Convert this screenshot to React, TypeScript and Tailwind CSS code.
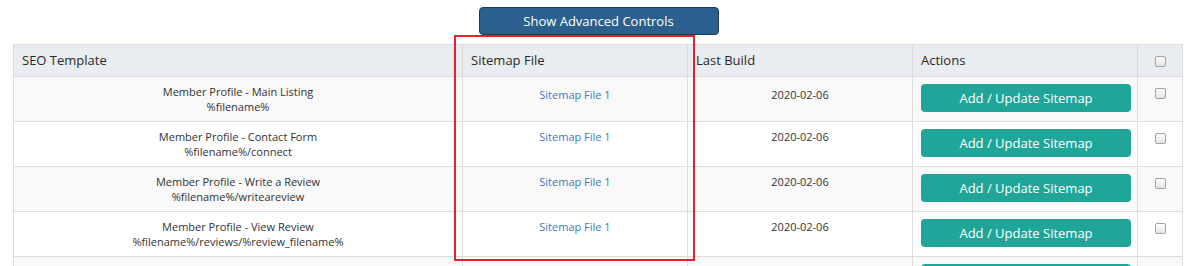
import React from "react";

interface Row {
  title: string;
  path: string;
}

const rows: Row[] = [
  { title: "Member Profile - Main Listing", path: "%filename%" },
  { title: "Member Profile - Contact Form", path: "%filename%/connect" },
  { title: "Member Profile - Write a Review", path: "%filename%/writeareview" },
  { title: "Member Profile - View Review", path: "%filename%/reviews/%review_filename%" },
];

function Box() {
  return (
    <span className="inline-block w-[11px] h-[11px] rounded-[2px] border border-[#a3a3a3] bg-gradient-to-b from-white to-[#e4e4e4]" />
  );
}

export default function App() {
  return (
    <div
      className="relative w-[1197px] h-[266px] overflow-hidden bg-white text-[#333]"
      style={{ fontFamily: '"Open Sans", "Liberation Sans", sans-serif' }}
    >
      <div className="flex justify-center pt-[7px]">
        <button className="w-[240px] h-[28px] rounded-[4px] border border-[#1c3d5c] bg-[#2b5f8e] text-white text-[13px] leading-none">
          Show Advanced Controls
        </button>
      </div>

      <div className="pl-[13px] pt-[9px]">
        <table className="w-[1169px] border-collapse table-fixed text-[11px] leading-[15px]">
          <colgroup>
            <col className="w-[449px]" />
            <col className="w-[225px]" />
            <col className="w-[225px]" />
            <col className="w-[225px]" />
            <col className="w-[45px]" />
          </colgroup>
          <thead>
            <tr className="h-[32px] bg-[#e9ecf0] text-[13px] text-[#2a2a2a] text-left">
              <th className="border border-[#dcdcdc] px-2 font-medium">SEO Template</th>
              <th className="border border-[#dcdcdc] px-2 font-medium">Sitemap File</th>
              <th className="border border-[#dcdcdc] px-2 font-medium">Last Build</th>
              <th className="border border-[#dcdcdc] px-2 font-medium">Actions</th>
              <th className="border border-[#dcdcdc] text-center pt-[4px]">
                <Box />
              </th>
            </tr>
          </thead>
          <tbody>
            {rows.map((r, i) => (
              <tr key={i} className={`h-[45px] ${i % 2 === 0 ? "bg-[#f9f9f9]" : "bg-white"}`}>
                <td className="border border-[#dcdcdc] align-top text-center pt-[7px]">
                  <div>{r.title}</div>
                  <div>{r.path}</div>
                </td>
                <td className={`border border-[#dcdcdc] align-top text-center ${i === 0 ? "pt-[10px]" : "pt-[7px]"}`}>
                  <a className="text-[#3a7ab8]">Sitemap File 1</a>
                </td>
                <td className={`border border-[#dcdcdc] align-top text-center ${i === 0 ? "pt-[10px]" : "pt-[7px]"}`}>
                  2020-02-06
                </td>
                <td className="border border-[#dcdcdc] align-top px-2 pt-[7px]">
                  <button className="w-[210px] h-[28px] rounded-[4px] bg-[#1fa699] text-white text-[13px] leading-none">
                    Add / Update Sitemap
                  </button>
                </td>
                <td className="border border-[#dcdcdc] align-top text-center pt-[10px]">
                  <Box />
                </td>
              </tr>
            ))}
            {/* next row only peeks in at the bottom edge */}
            <tr className="h-[45px] bg-[#f9f9f9]">
              <td className="border border-[#dcdcdc]" />
              <td className="border border-[#dcdcdc]" />
              <td className="border border-[#dcdcdc]" />
              <td className="border border-[#dcdcdc] align-top px-2 pt-[7px]">
                <div className="w-[210px] h-[28px] rounded-[4px] bg-[#1fa699]" />
              </td>
              <td className="border border-[#dcdcdc]" />
            </tr>
          </tbody>
        </table>
      </div>

      <div className="absolute left-[454px] top-[35px] w-[241px] h-[226px] border-2 border-[#e8202a] pointer-events-none" />
    </div>
  );
}
